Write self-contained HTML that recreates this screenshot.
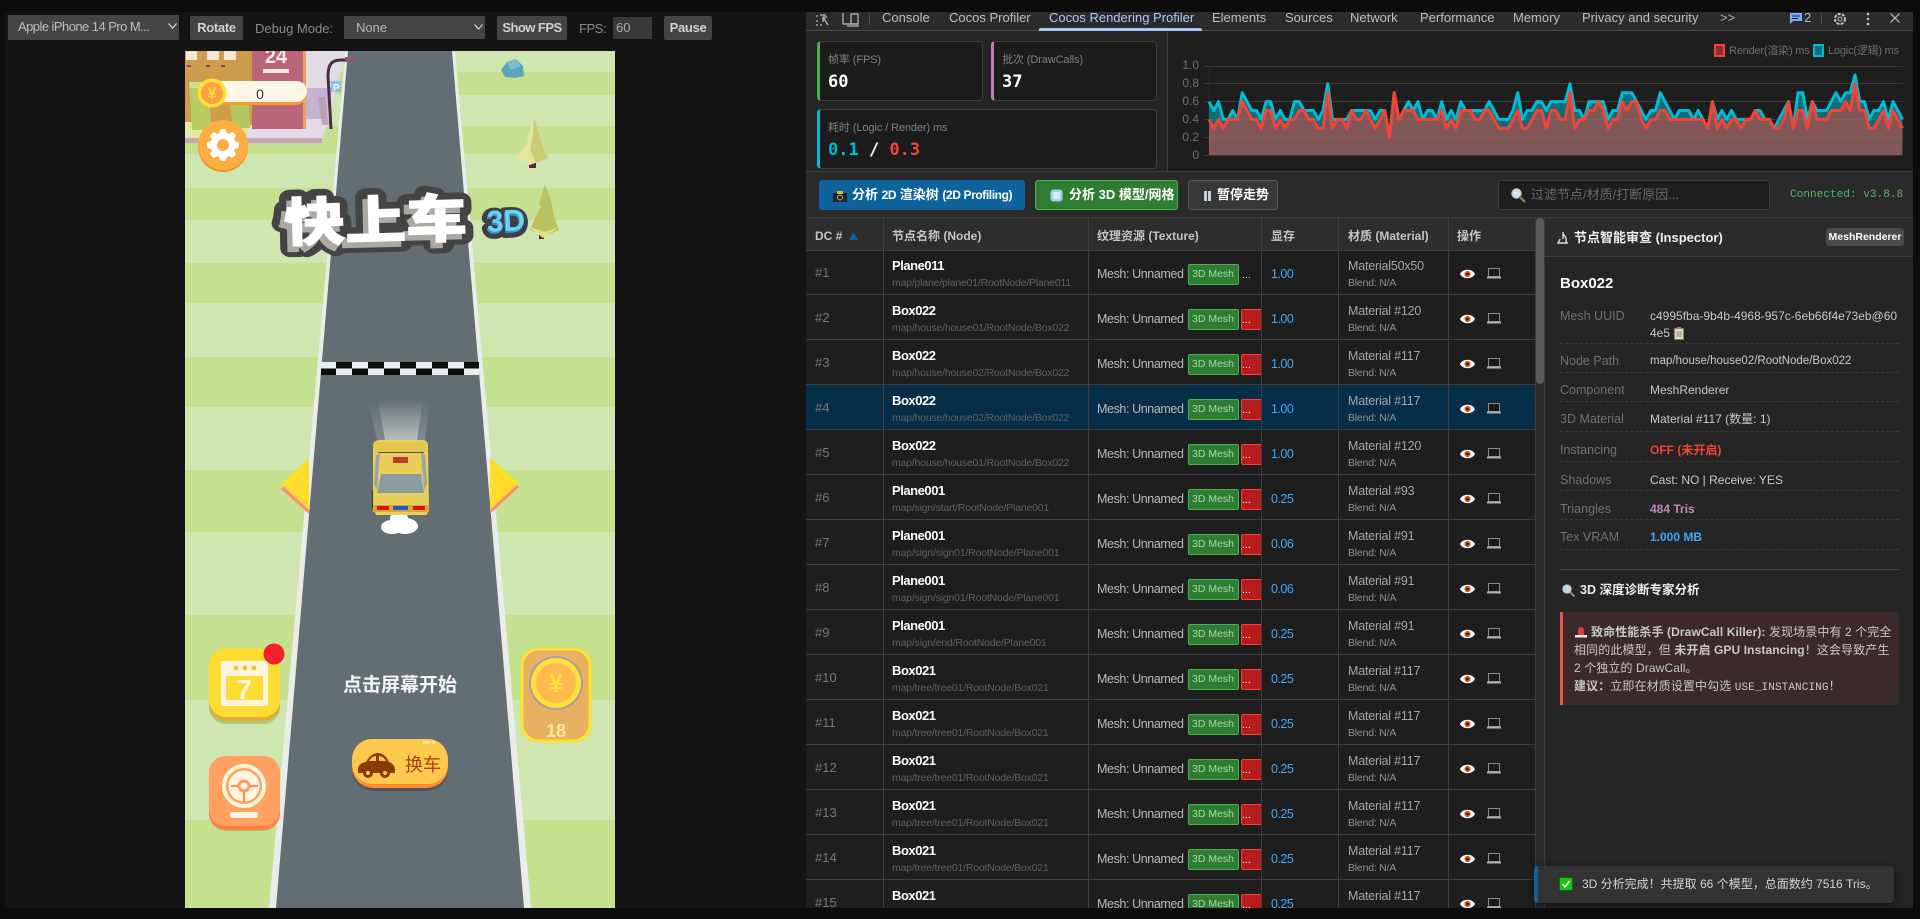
<!DOCTYPE html>
<html><head><meta charset="utf-8"><title>Cocos Rendering Profiler</title>
<style>
*{box-sizing:border-box;margin:0;padding:0}
html,body{width:1920px;height:919px;overflow:hidden;background:#0c0c0c;font-family:"Liberation Sans","Noto Sans CJK SC",sans-serif;font-size:13px;color:#ccc}
#p{position:absolute;left:0;top:0;width:1920px;height:919px;overflow:hidden}
div,span{white-space:nowrap}
.abs{position:absolute}
.btn{position:absolute;background:#444;color:#d0d0d0;font-weight:bold;font-size:13px;text-align:center;line-height:24px;border-radius:2px;letter-spacing:-.3px}
.tab{position:absolute;top:9px;line-height:18px;font-size:13px;color:#bdbdbd}
.card{position:absolute;background:#1c1c1c;border:1px solid #3c3c3c;border-left-width:3px;border-radius:4px}
.lab{position:absolute;left:8px;top:10px;font-size:11px;color:#808080;line-height:16px;letter-spacing:-.1px}
.val{position:absolute;left:8px;top:29px;font:bold 17px/22px "DejaVu Sans Mono",monospace;color:#fff}
.yl{position:absolute;width:30px;left:1169px;text-align:right;font-size:12px;line-height:14px;color:#6e6e6e}
.cb{position:absolute;top:180px;height:30px;border-radius:3px;color:#fff;font-weight:bold;font-size:13px;line-height:28px}
#rows{position:absolute;left:0;top:0;width:1920px;height:908px;overflow:hidden}
.row{position:absolute;left:806px;width:729px;height:45px;background:#1e1e1e;border-bottom:1px solid #3e3e3e}
.row.sel{background:#062e49}
.row span,.row b,.row i,.row svg{position:absolute;font-style:normal}
.dc{left:9px;top:14px;line-height:18px;color:#777}
.nm{left:86px;top:7px;line-height:18px;color:#fff;font-weight:bold;font-size:13px;letter-spacing:-.45px}
.pt{left:86px;top:25px;line-height:16px;color:#5f5f5f;font-size:10.5px;letter-spacing:-.2px}
.ms{left:291px;top:15px;line-height:18px;color:#b9b9b9;font-size:12.5px;letter-spacing:-.4px}
.g3{left:381.5px;top:14px;width:51px;height:21px;background:#2e7d32;border:1px solid #4caf50;border-radius:2px;color:#a5d6a7;font-size:10.5px;line-height:19px;text-align:center}
.rd{left:435px;top:14px;width:20px;height:21px;background:#b71c1c;border:1px solid #f44336;border-right:0;border-radius:2px 0 0 2px;color:#fff;font-size:10.5px;line-height:21px;padding-left:0}
.mm{left:465px;top:15px;line-height:18px;color:#41a8f5;font-size:12.5px;letter-spacing:-.5px}
.mt{left:542px;top:7px;line-height:18px;color:#a5a5a5;font-size:12.5px;letter-spacing:-.2px}
.bl{left:542px;top:25px;line-height:16px;color:#909090;font-size:10.5px;letter-spacing:-.2px}
.ey{left:654px;top:19px}
.lp{left:681px;top:18px}
.vl{position:absolute;top:218px;width:1px;height:690px;background:#3e3e3e;z-index:3}
.th{position:absolute;top:227px;line-height:18px;font-weight:bold;font-size:12px;color:#c4c4c4;z-index:4}
.il{position:absolute;left:1560px;line-height:16px;font-size:12.5px;color:#6f6f6f}
.iv{position:absolute;left:1650px;line-height:16px;font-size:12px;color:#c8c8c8}
.dl{position:absolute;left:1560px;width:339px;border-top:1px dashed #3a3a3a}
.an{position:absolute;left:1574px;line-height:18px;font-size:12px;letter-spacing:.1px;color:#c8c8c8}
</style></head>
<body>
<div id="p">
<svg width="0" height="0" style="position:absolute"><defs>
<symbol id="eye" viewBox="0 0 16 10"><path d="M0 5C3 -1 13 -1 16 5C13 11 3 11 0 5Z" fill="#fff"/><circle cx="8" cy="5" r="3.3" fill="#d2591b"/><circle cx="8" cy="5" r="1.3" fill="#201008"/></symbol>
<symbol id="lap" viewBox="0 0 14 11"><rect x="1.5" y="0.5" width="11" height="8" fill="#1a1a1a" stroke="#8a8a8a"/><rect x="0" y="8.5" width="14" height="2" fill="#b0b0b0"/></symbol>
</defs></svg>

<!-- left panel -->
<div class="abs" style="left:5px;top:12px;width:801px;height:896px;background:#141414"></div>
<div class="abs" style="left:8px;top:15px;width:171px;height:25px;background:#444;line-height:24px;padding-left:10px;font-size:13px;color:#bdbdbd;letter-spacing:-.55px">Apple iPhone 14 Pro M...<svg class="abs" style="left:160px;top:8px" width="9" height="6"><path d="M.5.5L4.5 5L8.5.5" fill="none" stroke="#ccc" stroke-width="1.3"/></svg></div>
<div class="btn" style="left:190px;top:16px;width:53px">Rotate</div>
<div class="abs" style="left:255px;top:20px;line-height:17px;color:#8a8a8a">Debug Mode:</div>
<div class="abs" style="left:344px;top:16px;width:141px;height:23px;background:#444;line-height:23px;padding-left:12px;color:#b5b5b5">None<svg class="abs" style="left:130px;top:8px" width="9" height="6"><path d="M.5.5L4.5 5L8.5.5" fill="none" stroke="#ccc" stroke-width="1.3"/></svg></div>
<div class="btn" style="left:497px;top:16px;width:70px;letter-spacing:-.55px">Show FPS</div>
<div class="abs" style="left:579px;top:20px;line-height:17px;color:#8a8a8a;letter-spacing:-.4px">FPS:</div>
<div class="abs" style="left:613px;top:17px;width:39px;height:22px;background:#3a3a3a;line-height:22px;padding-left:3px;color:#aaa">60</div>
<div class="btn" style="left:664px;top:16px;width:48px">Pause</div>

<!-- GAME -->
<svg class="abs" style="left:185px;top:51px" width="430" height="857" viewBox="185 51 430 857">
<defs>
<linearGradient id="beam" x1="0" y1="1" x2="0" y2="0"><stop offset="0" stop-color="#fff" stop-opacity=".42"/><stop offset="1" stop-color="#fff" stop-opacity="0"/></linearGradient>
<linearGradient id="beam2" x1="0" y1="1" x2="0" y2="0"><stop offset="0" stop-color="#fff" stop-opacity=".2"/><stop offset="1" stop-color="#fff" stop-opacity="0"/></linearGradient>
</defs>
<rect x="185" y="51" width="430" height="857" fill="#cfe6b1"/>
<g fill="#c5e08f"><rect x="185" y="72" width="430" height="23"/><rect x="185" y="126" width="430" height="28"/><rect x="185" y="188" width="430" height="32"/><rect x="185" y="263" width="430" height="40"/><rect x="185" y="357" width="430" height="50"/><rect x="185" y="470" width="430" height="62"/><rect x="185" y="615" width="430" height="85"/><rect x="185" y="820" width="430" height="88"/></g>
<!-- building area -->
<path d="M185 51H346L322 143H185Z" fill="#e2dbe6"/>
<rect x="185" y="138" width="137" height="5" fill="#c9a3ba"/>
<rect x="185" y="51" width="67" height="74" fill="#cc9d4b"/>
<g fill="#f2e7d2"><rect x="186" y="51" width="11" height="9"/><rect x="207" y="51" width="12" height="9"/><rect x="224" y="51" width="12" height="9"/></g>
<g fill="#a5386c"><rect x="187" y="65" width="4" height="2"/><rect x="206" y="65" width="4" height="2"/><rect x="221" y="65" width="4" height="2"/></g>
<path d="M185 122H250V130L240 138H185Z" fill="#e3e8a2"/>
<path d="M189 84H208L212 130H192Z" fill="#b9cb62"/><path d="M189 82H205L208 88H190Z" fill="#cfdc8a"/><path d="M230 103H249L250 128H233Z" fill="#b5c860"/>
<rect x="252" y="51" width="51" height="78" fill="#bb6678"/><rect x="303" y="51" width="3" height="78" fill="#e8a45a"/>
<text x="276" y="63" text-anchor="middle" font-family="Liberation Sans" font-weight="bold" font-size="20" fill="#f4e9e9">24</text>
<rect x="263" y="69" width="26" height="4" fill="#f4e9e9"/>
<path d="M306 88H332L326 119H306Z" fill="#c4b4d0"/>
<path d="M318 97L322 125L329 125L325 97Z" fill="#b899b4" opacity=".8"/>
<polygon points="345.5,51 348,51 276,908 269,908" fill="#e8edea"/>
<polygon points="452,51 455,51 531,908 524,908" fill="#e8edea"/>
<polygon points="348,51 452,51 524,908 276,908" fill="#626e74"/>
<rect x="331" y="81" width="10" height="11" fill="#86c2e8"/><text x="333" y="91" font-family="Liberation Sans" font-weight="bold" font-size="10" fill="#fff">P</text>
<path d="M331 129L328 76C328 64 332 60 341 60H352" fill="none" stroke="#4c2c3e" stroke-width="3"/>
<rect x="345" y="57" width="12" height="5" fill="#8e5a72"/>
<!-- rock -->
<path d="M501 70L507 62L516 59L523 66L524 76L515 78L505 77Z" fill="#5aa5b8"/><path d="M507 62L516 59L521 66L510 70Z" fill="#79bccb"/>
<!-- trees -->
<g><rect x="529" y="162" width="7" height="6" fill="#5b2334"/><polygon points="534,118 527,138 529,140 521,152 515,158 530,165 548,158 544,150 541,140 538,130" fill="#e6e5a0"/><polygon points="534,118 538,130 541,140 544,150 548,158 536,163 530,150 533,135" fill="#c8cb78"/></g>
<g transform="translate(-2 0)"><rect x="541" y="232" width="5" height="7" fill="#5b2334"/><polygon points="547,185 541,204 543,206 536,220 532,230 547,236 561,230 556,216 553,200" fill="#bac15e"/><polygon points="531,227 545,238 561,227 547,232" fill="#dfe18a"/></g>
<!-- coin pill -->
<rect x="202" y="81" width="105" height="24" rx="12" fill="#f59e2e"/><rect x="202" y="81" width="105" height="21" rx="10.5" fill="#fff8e6"/>
<text x="260" y="99" text-anchor="middle" font-family="Liberation Sans" font-size="14" fill="#333">0</text>
<circle cx="212" cy="93" r="14.5" fill="#ffe03a"/><circle cx="212" cy="93" r="11" fill="#ff9f44"/>
<text x="212" y="99" text-anchor="middle" font-family="Liberation Sans" font-size="17" font-weight="bold" fill="#ffdc3c">¥</text>
<!-- settings -->
<circle cx="223" cy="147" r="25" fill="#ec8f2d"/><circle cx="223" cy="145" r="25" fill="#ffad42"/>
<g fill="#fff"><circle cx="223" cy="145" r="12.5"/><rect x="219.5" y="129" width="7" height="32" rx="2.5"/><rect x="219.5" y="129" width="7" height="32" rx="2.5" transform="rotate(45 223 145)"/><rect x="219.5" y="129" width="7" height="32" rx="2.5" transform="rotate(90 223 145)"/><rect x="219.5" y="129" width="7" height="32" rx="2.5" transform="rotate(135 223 145)"/></g>
<circle cx="223" cy="145" r="6" fill="#ffad42"/>
<!-- finish line -->
<g fill="#e8edef"><rect x="321" y="362" width="158" height="13"/></g>
<g fill="#0b0f0e"><rect x="336" y="362" width="16" height="6.5"/><rect x="368" y="362" width="16" height="6.5"/><rect x="400" y="362" width="16" height="6.5"/><rect x="432" y="362" width="16" height="6.5"/><rect x="464" y="362" width="15" height="6.5"/><rect x="321" y="368.5" width="15" height="6.5"/><rect x="352" y="368.5" width="16" height="6.5"/><rect x="384" y="368.5" width="16" height="6.5"/><rect x="416" y="368.5" width="16" height="6.5"/><rect x="448" y="368.5" width="16" height="6.5"/></g>
<!-- arrows -->
<polygon points="309,462 281,489 309,514" fill="#ff8a80"/><polygon points="309,458 281,484 309,510" fill="#ffdd2b"/>
<polygon points="490,462 519,487 490,514" fill="#ff8a80"/><polygon points="490,458 519,483 490,510" fill="#ffdd2b"/>
<!-- car -->
<polygon points="368,400 377,440 425,440 430,400" fill="url(#beam2)"/>
<polygon points="378,400 385,440 417,440 423,400" fill="url(#beam)"/>
<rect x="372" y="490" width="3" height="18" fill="#333"/>
<ellipse cx="392" cy="527" rx="11" ry="7" fill="#fff"/><ellipse cx="405" cy="526" rx="13" ry="8" fill="#fff"/><ellipse cx="399" cy="518" rx="9" ry="6" fill="#fff"/>
<path d="M373 446Q373 440 380 440H422Q428 440 428 446L429 507L427 515H376L373 507Z" fill="#e8cf5a"/>
<path d="M375 442H427V452H375Z" fill="#e3c64e"/>
<rect x="378" y="452" width="46" height="1" fill="#5c4a20"/>
<path d="M376 455L380 453L377 490L374 484Z" fill="#9aa6a6"/><path d="M425 455L421 453L424 490L427 484Z" fill="#9aa6a6"/>
<polygon points="381,474 421,474 424,493 377,493" fill="#8c9ba0"/>
<rect x="393" y="457" width="15" height="6" fill="#c4392e"/>
<rect x="373" y="505" width="56" height="7" fill="#d9a732"/>
<rect x="377" y="506" width="12" height="4" fill="#d0100e"/><rect x="413" y="506" width="12" height="4" fill="#d0100e"/><rect x="393" y="506" width="15" height="4" fill="#2255cc"/>
<!-- logo -->
<g font-family="'Noto Sans CJK SC',sans-serif" font-weight="900" font-size="54">
<g transform="translate(376 239) rotate(-1.5) scale(1.13 .96)">
<text x="-2" y="2" text-anchor="middle" fill="#444" stroke="#444" stroke-width="19" stroke-linejoin="round">快上车</text>
<text x="-4" y="5" text-anchor="middle" fill="#a9aaa4" stroke="#a9aaa4" stroke-width="2.5">快上车</text>
<text x="0" y="0" text-anchor="middle" fill="#fff" stroke="#fff" stroke-width="1">快上车</text></g></g>
<g font-family="'Liberation Sans',sans-serif" font-weight="bold" font-size="30" transform="rotate(-3 505 224)">
<text x="486" y="233" fill="#3f4045" stroke="#3f4045" stroke-width="10" stroke-linejoin="round">3D</text>
<text x="486" y="233" fill="#3c96c8">3D</text><text x="487" y="231" fill="#69d0f6">3D</text></g>
<!-- calendar -->
<rect x="209" y="650" width="71" height="74" rx="17" fill="#a4b86a" opacity=".7"/><rect x="209" y="648" width="71" height="73" rx="17" fill="#e3ac35"/><rect x="209" y="648" width="71" height="69" rx="17" fill="#fedd33"/>
<rect x="221" y="661" width="47" height="45" rx="2" fill="#fff5df"/><rect x="226" y="676" width="37" height="24" fill="#fcdb32"/>
<g fill="#f3c033"><circle cx="236" cy="668" r="2.4"/><circle cx="245" cy="668" r="2.4"/><circle cx="254" cy="668" r="2.4"/></g>
<text x="244" y="699" text-anchor="middle" font-family="Liberation Sans" font-weight="bold" font-size="28" fill="#fff5df">7</text>
<circle cx="274" cy="654" r="10.5" fill="#f5222d"/>
<!-- steering -->
<rect x="209" y="758" width="71" height="73" rx="17" fill="#a4b86a" opacity=".7"/><rect x="209" y="756" width="71" height="74" rx="17" fill="#ff7f45"/><rect x="209" y="756" width="71" height="70" rx="17" fill="#ffa160"/>
<circle cx="244" cy="786" r="20" fill="#ffa160" stroke="#fff5df" stroke-width="4"/>
<circle cx="244" cy="786" r="15.5" fill="#fff5df"/>
<path d="M231 786H238M250 786H258M244 792V802" stroke="#ff8a50" stroke-width="2"/><circle cx="244" cy="786" r="6.5" fill="#ff9a5c"/><circle cx="244" cy="786" r="3.5" fill="#fff5df"/>
<rect x="230" y="812" width="28" height="6" rx="2" fill="#fff5df"/>
<!-- start text -->
<text x="400" y="691" text-anchor="middle" font-family="'Noto Sans CJK SC',sans-serif" font-weight="bold" font-size="19" fill="#f5f5f5">点击屏幕开始</text>
<!-- car btn -->
<rect x="352" y="742" width="96" height="49" rx="21" fill="#4c565b"/><rect x="352" y="739" width="96" height="49" rx="21" fill="#ff8a30"/><rect x="352" y="739" width="96" height="45" rx="20" fill="#ffc94d"/>
<rect x="423" y="741" width="7" height="3" rx="1.5" fill="#ffe9b0"/><rect x="432" y="741" width="3" height="3" rx="1.5" fill="#ffe9b0"/>
<path d="M358 770Q358 763 366 762Q371 753 378 753Q385 753 389 762Q395 764 395 771L395 773H358Z" fill="#8b3a00"/>
<path d="M369 761Q372 756 376 756V761ZM379 756Q383 756 386 761H379Z" fill="#ffc94d"/>
<circle cx="368" cy="773" r="5" fill="#8b3a00"/><circle cx="368" cy="773" r="2" fill="#ffc94d"/><circle cx="385" cy="773" r="5" fill="#8b3a00"/><circle cx="385" cy="773" r="2" fill="#ffc94d"/>
<text x="423" y="771" text-anchor="middle" font-family="'Noto Sans CJK SC',sans-serif" font-size="18" fill="#a8410a">换车</text>
<!-- coin card -->
<rect x="522" y="649" width="68" height="92" rx="17" fill="#e8b060" stroke="#ffe22b" stroke-width="3"/>
<circle cx="556" cy="683" r="27" fill="#a3a3a0"/><circle cx="556" cy="683" r="25" fill="#ffe03a"/><circle cx="556" cy="683" r="20" fill="#ffb950"/>
<text x="556" y="692" text-anchor="middle" font-family="Liberation Sans" font-weight="bold" font-size="26" fill="#ffe03a">¥</text>
<text x="556" y="737" text-anchor="middle" font-family="Liberation Sans" font-weight="bold" font-size="18" fill="#ffe9a0">18</text>
</svg>

<!-- DEVTOOLS -->
<div class="abs" style="left:806px;top:12px;width:1107px;height:896px;background:#212121;overflow:hidden"></div>
<div class="abs" style="left:806px;top:12px;width:1107px;height:19px;background:#2b2b2b;border-bottom:1px solid #4a4a4a"></div>
<svg class="abs" style="left:816px;top:12px" width="46" height="16"><g fill="none" stroke="#bdbdbd" stroke-width="1.2"><path d="M1 3V5M1 8V10M1 12V14M6 13H4M10 3H4"/><path d="M7 5L12 13M7 5V10M7 5H11"/><path d="M27 1V12H42M31 14H43"/><rect x="35" y="2" width="7" height="10"/></g></svg>
<div class="abs" style="left:869px;top:13px;width:1px;height:12px;background:#4a4a4a"></div>
<span class="tab" style="left:882px">Console</span>
<span class="tab" style="left:949px">Cocos Profiler</span>
<span class="tab" style="left:1049px;color:#a8c7fa">Cocos Rendering Profiler</span>
<div class="abs" style="left:1039px;top:28px;width:163px;height:3px;background:#a8c7fa;border-radius:2px 2px 0 0"></div>
<span class="tab" style="left:1212px">Elements</span>
<span class="tab" style="left:1285px">Sources</span>
<span class="tab" style="left:1350px">Network</span>
<span class="tab" style="left:1420px">Performance</span>
<span class="tab" style="left:1513px">Memory</span>
<span class="tab" style="left:1582px">Privacy and security</span>
<span class="tab" style="left:1720px;color:#aaa">&gt;&gt;</span>
<svg class="abs" style="left:1790px;top:13px" width="13" height="12"><path d="M0 0H12V8H3L0 11Z" fill="#7cacf8"/><path d="M2 3H10M2 5.5H8" stroke="#1b2a44"/></svg>
<span class="tab" style="left:1804px;color:#bbb">2</span>
<div class="abs" style="left:1821px;top:13px;width:1px;height:12px;background:#4a4a4a"></div>
<svg class="abs" style="left:1833px;top:12px" width="14" height="14"><circle cx="7" cy="7" r="5" fill="none" stroke="#c0c0c0" stroke-width="2" stroke-dasharray="3 1.2"/><circle cx="7" cy="7" r="2" fill="none" stroke="#c0c0c0"/></svg>
<svg class="abs" style="left:1866px;top:12px" width="4" height="14"><g fill="#c0c0c0"><circle cx="2" cy="2" r="1.3"/><circle cx="2" cy="7" r="1.3"/><circle cx="2" cy="12" r="1.3"/></g></svg>
<svg class="abs" style="left:1890px;top:13px" width="10" height="10"><path d="M.5.5L9.5 9.5M9.5.5L.5 9.5" stroke="#c0c0c0" stroke-width="1.2"/></svg>

<!-- stats -->
<div class="abs" style="left:806px;top:31px;width:362px;height:140px;background:#252525;border-right:1px solid #3c3c3c"></div>
<div class="card" style="left:817px;top:41px;width:166px;height:60px;border-left-color:#4caf50"><div class="lab">帧率 (FPS)</div><div class="val">60</div></div>
<div class="card" style="left:991px;top:41px;width:166px;height:60px;border-left-color:#ba7fba"><div class="lab">批次 (DrawCalls)</div><div class="val">37</div></div>
<div class="card" style="left:817px;top:109px;width:340px;height:60px;border-left-color:#00bcd4"><div class="lab">耗时 (Logic / Render) ms</div><div class="val"><span style="color:#00bcd4">0.1</span> / <span style="color:#f44336">0.3</span></div></div>
<div class="abs" style="left:1168px;top:31px;width:745px;height:140px;background:#1e1e1e"></div>
<div class="abs" style="left:806px;top:171px;width:1107px;height:1px;background:#3c3c3c"></div>
<div class="yl" style="top:58px">1.0</div><div class="yl" style="top:76px">0.8</div><div class="yl" style="top:94px">0.6</div><div class="yl" style="top:112px">0.4</div><div class="yl" style="top:130px">0.2</div><div class="yl" style="top:148px">0</div>
<svg class="abs" style="left:1204px;top:66px" width="699" height="90">
<g stroke="#3a3a3a"><path d="M0 .5H699M0 17.5H699M0 35.5H699M0 53.5H699M0 71.5H699M0 89.5H699"/><path d="M5 0V90" stroke="#2a2a2a"/></g></svg>
<svg class="abs" style="left:1209px;top:66px;overflow:visible" width="693.5" height="89" viewBox="0 0 146 10" preserveAspectRatio="none">
<polygon fill="#00bcd4" fill-opacity=".5" points="0,10 0,4 1,5 2,4 3,6 4,6 5,5 6,6 7,3 8,4 9,5 10,5 11,6 12,4 13,4 14,6 15,5 16,6 17,6 18,4 19,4 20,5 21,5 22,5 23,6 24,5 25,2 26,6 27,6 28,6 29,6 30,5 31,5 32,5 33,5 34,5 35,6 36,5 37,5 38,8 39,3 40,6 41,5 42,4 43,5 44,4 45,6 46,5 47,5 48,6 49,4 50,6 51,5 52,6 53,4 54,5 55,5 56,5 57,5 58,5 59,4 60,5 61,6 62,6 63,6 64,5 65,3 66,6 67,5 68,5 69,4 70,4 71,5 72,4 73,4 74,4 75,4 76,2 77,5 78,5 79,6 80,4 81,4 82,4 83,4 84,6 85,5 86,5 87,3 88,3 89,3 90,4 91,5 92,6 93,5 94,5 95,3 96,4 97,5 98,6 99,5 100,5 101,5 102,6 103,5 104,6 105,7 106,4 107,6 108,5 109,6 110,5 111,6 112,6 113,6 114,6 115,5 116,5 117,6 118,6 119,7 120,6 121,5 122,4 123,7 124,3 125,3 126,6 127,4 128,5 129,5 130,5 131,4 132,3 133,4 134,3 135,3 136,1 137,4 138,4 139,6 140,5 141,5 142,4 143,6 144,4 145,5 146,6 146,10"/>
<polyline fill="none" stroke="#00bcd4" stroke-width="3" vector-effect="non-scaling-stroke" stroke-linejoin="round" points="0,4 1,5 2,4 3,6 4,6 5,5 6,6 7,3 8,4 9,5 10,5 11,6 12,4 13,4 14,6 15,5 16,6 17,6 18,4 19,4 20,5 21,5 22,5 23,6 24,5 25,2 26,6 27,6 28,6 29,6 30,5 31,5 32,5 33,5 34,5 35,6 36,5 37,5 38,8 39,3 40,6 41,5 42,4 43,5 44,4 45,6 46,5 47,5 48,6 49,4 50,6 51,5 52,6 53,4 54,5 55,5 56,5 57,5 58,5 59,4 60,5 61,6 62,6 63,6 64,5 65,3 66,6 67,5 68,5 69,4 70,4 71,5 72,4 73,4 74,4 75,4 76,2 77,5 78,5 79,6 80,4 81,4 82,4 83,4 84,6 85,5 86,5 87,3 88,3 89,3 90,4 91,5 92,6 93,5 94,5 95,3 96,4 97,5 98,6 99,5 100,5 101,5 102,6 103,5 104,6 105,7 106,4 107,6 108,5 109,6 110,5 111,6 112,6 113,6 114,6 115,5 116,5 117,6 118,6 119,7 120,6 121,5 122,4 123,7 124,3 125,3 126,6 127,4 128,5 129,5 130,5 131,4 132,3 133,4 134,3 135,3 136,1 137,4 138,4 139,6 140,5 141,5 142,4 143,6 144,4 145,5 146,6"/>
<polygon fill="#f44336" fill-opacity=".5" points="0,10 0,6 1,7 2,6 3,7 4,6 5,6 6,6 7,4 8,5 9,6 10,6 11,7 12,5 13,5 14,7 15,6 16,7 17,6 18,6 19,5 20,5 21,6 22,6 23,7 24,7 25,3 26,7 27,6 28,6 29,7 30,5 31,6 32,6 33,5 34,6 35,7 36,6 37,5 38,8 39,3 40,6 41,5 42,5 43,5 44,6 45,6 46,6 47,6 48,6 49,5 50,7 51,6 52,7 53,5 54,5 55,5 56,6 57,6 58,5 59,5 60,6 61,7 62,7 63,7 64,6 65,5 66,7 67,7 68,6 69,5 70,5 71,7 72,5 73,5 74,6 75,6 76,3 77,7 78,6 79,6 80,5 81,5 82,4 83,5 84,7 85,6 86,6 87,4 88,5 89,4 90,4 91,6 92,7 93,6 94,6 95,5 96,5 97,6 98,6 99,6 100,6 101,6 102,6 103,6 104,6 105,7 106,4 107,7 108,6 109,7 110,6 111,6 112,7 113,6 114,6 115,5 116,6 117,6 118,6 119,7 120,7 121,6 122,4 123,7 124,5 125,5 126,7 127,4 128,6 129,6 130,6 131,5 132,5 133,5 134,4 135,5 136,2 137,5 138,5 139,7 140,7 141,6 142,5 143,7 144,5 145,6 146,7 146,10"/>
<polyline fill="none" stroke="#f44336" stroke-width="3" vector-effect="non-scaling-stroke" stroke-linejoin="round" points="0,6 1,7 2,6 3,7 4,6 5,6 6,6 7,4 8,5 9,6 10,6 11,7 12,5 13,5 14,7 15,6 16,7 17,6 18,6 19,5 20,5 21,6 22,6 23,7 24,7 25,3 26,7 27,6 28,6 29,7 30,5 31,6 32,6 33,5 34,6 35,7 36,6 37,5 38,8 39,3 40,6 41,5 42,5 43,5 44,6 45,6 46,6 47,6 48,6 49,5 50,7 51,6 52,7 53,5 54,5 55,5 56,6 57,6 58,5 59,5 60,6 61,7 62,7 63,7 64,6 65,5 66,7 67,7 68,6 69,5 70,5 71,7 72,5 73,5 74,6 75,6 76,3 77,7 78,6 79,6 80,5 81,5 82,4 83,5 84,7 85,6 86,6 87,4 88,5 89,4 90,4 91,6 92,7 93,6 94,6 95,5 96,5 97,6 98,6 99,6 100,6 101,6 102,6 103,6 104,6 105,7 106,4 107,7 108,6 109,7 110,6 111,6 112,7 113,6 114,6 115,5 116,6 117,6 118,6 119,7 120,7 121,6 122,4 123,7 124,5 125,5 126,7 127,4 128,6 129,6 130,6 131,5 132,5 133,5 134,4 135,5 136,2 137,5 138,5 139,7 140,7 141,6 142,5 143,7 144,5 145,6 146,7"/>
</svg>
<div class="abs" style="left:1714px;top:44px;width:11px;height:13px;background:rgba(244,67,54,.5);border:2px solid #f44336"></div>
<div class="abs" style="left:1729px;top:44px;line-height:14px;font-size:11px;color:#6e6e6e;letter-spacing:-.2px">Render(渲染) ms</div>
<div class="abs" style="left:1813px;top:44px;width:11px;height:13px;background:rgba(0,188,212,.5);border:2px solid #00bcd4"></div>
<div class="abs" style="left:1828px;top:44px;line-height:14px;font-size:11px;color:#6e6e6e;letter-spacing:-.2px">Logic(逻辑) ms</div>

<!-- controls -->
<div class="abs" style="left:806px;top:172px;width:1107px;height:45px;background:#2a2a2a"></div>
<div class="abs" style="left:806px;top:217px;width:1107px;height:1px;background:#3c3c3c"></div>
<div class="cb" style="left:819px;width:206px;background:#0e639c;padding-left:33px;line-height:30px">分析 <span style="font-size:12px;letter-spacing:-.4px">2D</span> 渲染树 <span style="font-size:12px;letter-spacing:-.4px">(2D Profiling)</span><svg class="abs" style="left:14px;top:11px" width="14" height="11"><rect y="2" width="14" height="9" fill="#222"/><rect x="4" width="6" height="3" fill="#e8b030"/><circle cx="7" cy="6.5" r="2.5" fill="none" stroke="#aaa"/></svg></div>
<div class="cb" style="left:1035px;width:143px;background:#2e7d32;border:1px solid #4caf50;padding-left:33px">分析 3D 模型/网格<svg class="abs" style="left:14px;top:8px" width="13" height="13"><rect x=".5" y=".5" width="12" height="12" rx="3" fill="#a5cdf0"/><rect x="3" y="3" width="7" height="7" rx="2" fill="#d6eaff"/></svg></div>
<div class="cb" style="left:1188px;width:90px;background:#383838;border:1px solid #555;padding-left:28px">暂停走势<svg class="abs" style="left:15px;top:10px" width="7" height="10"><path d="M0 0H3V10H0ZM4 0H7V10H4Z" fill="#c8d2dc"/></svg></div>
<div class="abs" style="left:1498px;top:180px;width:272px;height:30px;background:#1e1e1e;border:1px solid #3c3c3c;border-radius:3px;line-height:28px;padding-left:32px;color:#6a6a6a;font-size:13px">过滤节点/材质/打断原因...<svg class="abs" style="left:12px;top:7px" width="15" height="15"><circle cx="5.5" cy="5.5" r="4.5" fill="#cfe6f5" stroke="#c9c9c9" stroke-width="1.4"/><path d="M8.5 8.5L14 14" stroke="#8a7a60" stroke-width="2.4"/></svg></div>
<div class="abs" style="left:1790px;top:187px;line-height:16px;font:11.1px/16px 'Liberation Mono',monospace;color:#55b85a">Connected: v3.8.8</div>

<!-- table header -->
<div class="abs" style="left:806px;top:218px;width:729px;height:33px;background:#2d2d2d;border-bottom:1px solid #3e3e3e;z-index:2"></div>
<div class="th" style="left:815px">DC #</div><svg class="abs" style="left:849px;top:232px;z-index:4" width="9" height="8"><path d="M4.5 0L9 8H0Z" fill="#0e639c"/></svg>
<div class="th" style="left:892px">节点名称 (Node)</div>
<div class="th" style="left:1097px">纹理资源 (Texture)</div>
<div class="th" style="left:1271px">显存</div>
<div class="th" style="left:1348px">材质 (Material)</div>
<div class="th" style="left:1457px">操作</div>
<div class="vl" style="left:883px"></div><div class="vl" style="left:1088px"></div><div class="vl" style="left:1261px"></div><div class="vl" style="left:1338px"></div><div class="vl" style="left:1448px"></div>

<!-- rows -->
<div id="rows">
<div class="row" style="top:250px"><span class="dc">#1</span><b class="nm">Plane011</b><span class="pt">map/plane/plane01/RootNode/Plane011</span><span class="ms">Mesh: Unnamed</span><span class="g3">3D Mesh</span><span style="left:436px;top:15px;line-height:21px;color:#ddd;font-size:10.5px">...</span><span class="mm">1.00</span><span class="mt">Material50x50</span><span class="bl">Blend: N/A</span><svg class="ey" width="15" height="10"><use href="#eye"/></svg><svg class="lp" width="14" height="11"><use href="#lap"/></svg></div>
<div class="row" style="top:295px"><span class="dc">#2</span><b class="nm">Box022</b><span class="pt">map/house/house01/RootNode/Box022</span><span class="ms">Mesh: Unnamed</span><span class="g3">3D Mesh</span><span class="rd">...</span><span class="mm">1.00</span><span class="mt">Material #120</span><span class="bl">Blend: N/A</span><svg class="ey" width="15" height="10"><use href="#eye"/></svg><svg class="lp" width="14" height="11"><use href="#lap"/></svg></div>
<div class="row" style="top:340px"><span class="dc">#3</span><b class="nm">Box022</b><span class="pt">map/house/house02/RootNode/Box022</span><span class="ms">Mesh: Unnamed</span><span class="g3">3D Mesh</span><span class="rd">...</span><span class="mm">1.00</span><span class="mt">Material #117</span><span class="bl">Blend: N/A</span><svg class="ey" width="15" height="10"><use href="#eye"/></svg><svg class="lp" width="14" height="11"><use href="#lap"/></svg></div>
<div class="row sel" style="top:385px"><span class="dc">#4</span><b class="nm">Box022</b><span class="pt">map/house/house02/RootNode/Box022</span><span class="ms">Mesh: Unnamed</span><span class="g3">3D Mesh</span><span class="rd">...</span><span class="mm">1.00</span><span class="mt">Material #117</span><span class="bl">Blend: N/A</span><svg class="ey" width="15" height="10"><use href="#eye"/></svg><svg class="lp" width="14" height="11"><use href="#lap"/></svg></div>
<div class="row" style="top:430px"><span class="dc">#5</span><b class="nm">Box022</b><span class="pt">map/house/house01/RootNode/Box022</span><span class="ms">Mesh: Unnamed</span><span class="g3">3D Mesh</span><span class="rd">...</span><span class="mm">1.00</span><span class="mt">Material #120</span><span class="bl">Blend: N/A</span><svg class="ey" width="15" height="10"><use href="#eye"/></svg><svg class="lp" width="14" height="11"><use href="#lap"/></svg></div>
<div class="row" style="top:475px"><span class="dc">#6</span><b class="nm">Plane001</b><span class="pt">map/sign/start/RootNode/Plane001</span><span class="ms">Mesh: Unnamed</span><span class="g3">3D Mesh</span><span class="rd">...</span><span class="mm">0.25</span><span class="mt">Material #93</span><span class="bl">Blend: N/A</span><svg class="ey" width="15" height="10"><use href="#eye"/></svg><svg class="lp" width="14" height="11"><use href="#lap"/></svg></div>
<div class="row" style="top:520px"><span class="dc">#7</span><b class="nm">Plane001</b><span class="pt">map/sign/sign01/RootNode/Plane001</span><span class="ms">Mesh: Unnamed</span><span class="g3">3D Mesh</span><span class="rd">...</span><span class="mm">0.06</span><span class="mt">Material #91</span><span class="bl">Blend: N/A</span><svg class="ey" width="15" height="10"><use href="#eye"/></svg><svg class="lp" width="14" height="11"><use href="#lap"/></svg></div>
<div class="row" style="top:565px"><span class="dc">#8</span><b class="nm">Plane001</b><span class="pt">map/sign/sign01/RootNode/Plane001</span><span class="ms">Mesh: Unnamed</span><span class="g3">3D Mesh</span><span class="rd">...</span><span class="mm">0.06</span><span class="mt">Material #91</span><span class="bl">Blend: N/A</span><svg class="ey" width="15" height="10"><use href="#eye"/></svg><svg class="lp" width="14" height="11"><use href="#lap"/></svg></div>
<div class="row" style="top:610px"><span class="dc">#9</span><b class="nm">Plane001</b><span class="pt">map/sign/end/RootNode/Plane001</span><span class="ms">Mesh: Unnamed</span><span class="g3">3D Mesh</span><span class="rd">...</span><span class="mm">0.25</span><span class="mt">Material #91</span><span class="bl">Blend: N/A</span><svg class="ey" width="15" height="10"><use href="#eye"/></svg><svg class="lp" width="14" height="11"><use href="#lap"/></svg></div>
<div class="row" style="top:655px"><span class="dc">#10</span><b class="nm">Box021</b><span class="pt">map/tree/tree01/RootNode/Box021</span><span class="ms">Mesh: Unnamed</span><span class="g3">3D Mesh</span><span class="rd">...</span><span class="mm">0.25</span><span class="mt">Material #117</span><span class="bl">Blend: N/A</span><svg class="ey" width="15" height="10"><use href="#eye"/></svg><svg class="lp" width="14" height="11"><use href="#lap"/></svg></div>
<div class="row" style="top:700px"><span class="dc">#11</span><b class="nm">Box021</b><span class="pt">map/tree/tree01/RootNode/Box021</span><span class="ms">Mesh: Unnamed</span><span class="g3">3D Mesh</span><span class="rd">...</span><span class="mm">0.25</span><span class="mt">Material #117</span><span class="bl">Blend: N/A</span><svg class="ey" width="15" height="10"><use href="#eye"/></svg><svg class="lp" width="14" height="11"><use href="#lap"/></svg></div>
<div class="row" style="top:745px"><span class="dc">#12</span><b class="nm">Box021</b><span class="pt">map/tree/tree01/RootNode/Box021</span><span class="ms">Mesh: Unnamed</span><span class="g3">3D Mesh</span><span class="rd">...</span><span class="mm">0.25</span><span class="mt">Material #117</span><span class="bl">Blend: N/A</span><svg class="ey" width="15" height="10"><use href="#eye"/></svg><svg class="lp" width="14" height="11"><use href="#lap"/></svg></div>
<div class="row" style="top:790px"><span class="dc">#13</span><b class="nm">Box021</b><span class="pt">map/tree/tree01/RootNode/Box021</span><span class="ms">Mesh: Unnamed</span><span class="g3">3D Mesh</span><span class="rd">...</span><span class="mm">0.25</span><span class="mt">Material #117</span><span class="bl">Blend: N/A</span><svg class="ey" width="15" height="10"><use href="#eye"/></svg><svg class="lp" width="14" height="11"><use href="#lap"/></svg></div>
<div class="row" style="top:835px"><span class="dc">#14</span><b class="nm">Box021</b><span class="pt">map/tree/tree01/RootNode/Box021</span><span class="ms">Mesh: Unnamed</span><span class="g3">3D Mesh</span><span class="rd">...</span><span class="mm">0.25</span><span class="mt">Material #117</span><span class="bl">Blend: N/A</span><svg class="ey" width="15" height="10"><use href="#eye"/></svg><svg class="lp" width="14" height="11"><use href="#lap"/></svg></div>
<div class="row" style="top:880px"><span class="dc">#15</span><b class="nm">Box021</b><span class="pt">map/tree/tree01/RootNode/Box021</span><span class="ms">Mesh: Unnamed</span><span class="g3">3D Mesh</span><span class="rd">...</span><span class="mm">0.25</span><span class="mt">Material #117</span><span class="bl">Blend: N/A</span><svg class="ey" width="15" height="10"><use href="#eye"/></svg><svg class="lp" width="14" height="11"><use href="#lap"/></svg></div>
</div>

<!-- scrollbar -->
<div class="abs" style="left:1535px;top:218px;width:10px;height:690px;background:#2b2b2b;border-left:1px solid #3c3c3c;border-right:1px solid #3c3c3c"></div>
<div class="abs" style="left:1536px;top:218px;width:8px;height:166px;background:#5a5a5a;border-radius:4px"></div>

<!-- inspector -->
<div class="abs" style="left:1545px;top:218px;width:368px;height:690px;background:#252525"></div>
<div class="abs" style="left:1545px;top:218px;width:368px;height:39px;background:#2c2c2c;border-bottom:1px solid #3c3c3c"></div>
<svg class="abs" style="left:1557px;top:231px" width="12" height="14"><path d="M6 1V8M3 8Q2 11 1 12H11M6 3Q10 6 9 12" fill="none" stroke="#ddd" stroke-width="1.4"/></svg>
<div class="abs" style="left:1574px;top:229px;line-height:18px;font-weight:bold;font-size:13px;color:#eee">节点智能审查 (Inspector)</div>
<div class="abs" style="left:1826px;top:228px;width:78px;height:18px;background:#4a4a4a;border-radius:3px;text-align:center;line-height:18px;font-weight:bold;font-size:10.5px;color:#fff">MeshRenderer</div>
<div class="abs" style="left:1560px;top:274px;line-height:20px;font-weight:bold;font-size:15px;color:#fff">Box022</div>
<div class="il" style="top:308px">Mesh UUID</div><div class="iv" style="top:308px">c4995fba-9b4b-4968-957c-6eb66f4e73eb@60</div><div class="iv" style="top:325px">4e5</div>
<svg class="abs" style="left:1674px;top:327px" width="10" height="13"><rect x=".5" y="1.5" width="9" height="11" fill="#e8dcc0" stroke="#8a7a60"/><path d="M2 5H8M2 7H8M2 9H8" stroke="#888"/><rect x="3" width="4" height="2" fill="#888"/></svg>
<div class="dl" style="top:343px"></div>
<div class="il" style="top:353px">Node Path</div><div class="iv" style="top:353px;font-size:11.5px">map/house/house02/RootNode/Box022</div>
<div class="dl" style="top:372px"></div>
<div class="il" style="top:382px">Component</div><div class="iv" style="top:382px">MeshRenderer</div>
<div class="dl" style="top:401px"></div>
<div class="il" style="top:411px">3D Material</div><div class="iv" style="top:411px">Material #117 (数量: 1)</div>
<div class="dl" style="top:431px"></div>
<div class="il" style="top:442px">Instancing</div><div class="iv" style="top:442px;color:#f44336;font-weight:bold">OFF (未开启)</div>
<div class="dl" style="top:461px"></div>
<div class="il" style="top:472px">Shadows</div><div class="iv" style="top:472px">Cast: NO | Receive: YES</div>
<div class="dl" style="top:490px"></div>
<div class="il" style="top:501px">Triangles</div><div class="iv" style="top:501px;color:#c586c0;font-weight:bold">484 Tris</div>
<div class="dl" style="top:519px"></div>
<div class="il" style="top:529px">Tex VRAM</div><div class="iv" style="top:529px;color:#41a8f5;font-weight:bold">1.000 MB</div>
<div class="dl" style="top:549px"></div>
<div class="abs" style="left:1560px;top:569px;width:339px;height:1px;background:#444"></div>
<svg class="abs" style="left:1562px;top:584px" width="13" height="13"><circle cx="5" cy="5" r="4" fill="#b8dcf0" stroke="#c9c9c9" stroke-width="1.3"/><path d="M8 8L12.5 12.5" stroke="#7a90a0" stroke-width="2"/></svg>
<div class="abs" style="left:1580px;top:581px;line-height:18px;font-weight:bold;font-size:12.5px;color:#eee">3D 深度诊断专家分析</div>
<div class="abs" style="left:1560px;top:612px;width:339px;height:93px;background:#3a2a2c;border-left:3px solid #ef5350;border-radius:0 3px 3px 0"></div>
<svg class="abs" style="left:1575px;top:626px" width="12" height="12"><path d="M3 9V5Q3 1 6 1Q9 1 9 5V9Z" fill="#e53935"/><rect y="9" width="12" height="2.5" fill="#eee"/></svg>
<div class="an" style="left:1591px;top:623px"><b>致命性能杀手 (DrawCall Killer):</b> 发现场景中有 2 个完全</div>
<div class="an" style="top:641px">相同的此模型，但 <b>未开启 GPU Instancing</b>！这会导致产生</div>
<div class="an" style="top:659px">2 个独立的 DrawCall。</div>
<div class="an" style="top:677px"><b>建议：</b>立即在材质设置中勾选 <span style="font:11px 'Liberation Mono',monospace">USE_INSTANCING</span>！</div>

<!-- toast -->
<div class="abs" style="left:1534px;top:866px;width:360px;height:37px;background:#333;border-left:4px solid #0e639c;border-radius:4px;box-shadow:0 2px 8px rgba(0,0,0,.5);z-index:6"><div class="abs" style="left:44px;top:9px;line-height:18px;font-size:12px;color:#d4d4d4">3D 分析完成！共提取 66 个模型，总面数约 7516 Tris。</div><svg class="abs" style="left:21px;top:11px" width="14" height="14"><rect width="14" height="14" fill="#16c60c" stroke="#111"/><path d="M3.5 7L6 10L10.5 4" fill="none" stroke="#fff" stroke-width="1.6"/></svg></div>

<!-- top / bottom / edges -->
<div class="abs" style="left:0;top:0;width:1920px;height:12px;background:#0c0c0c;z-index:9"></div>
<div class="abs" style="left:0;top:908px;width:1920px;height:11px;background:#0c0c0c;z-index:9"></div>
<div class="abs" style="left:1913px;top:0;width:7px;height:919px;background:#0c0c0c;z-index:9"></div>
</div>
</body></html>
